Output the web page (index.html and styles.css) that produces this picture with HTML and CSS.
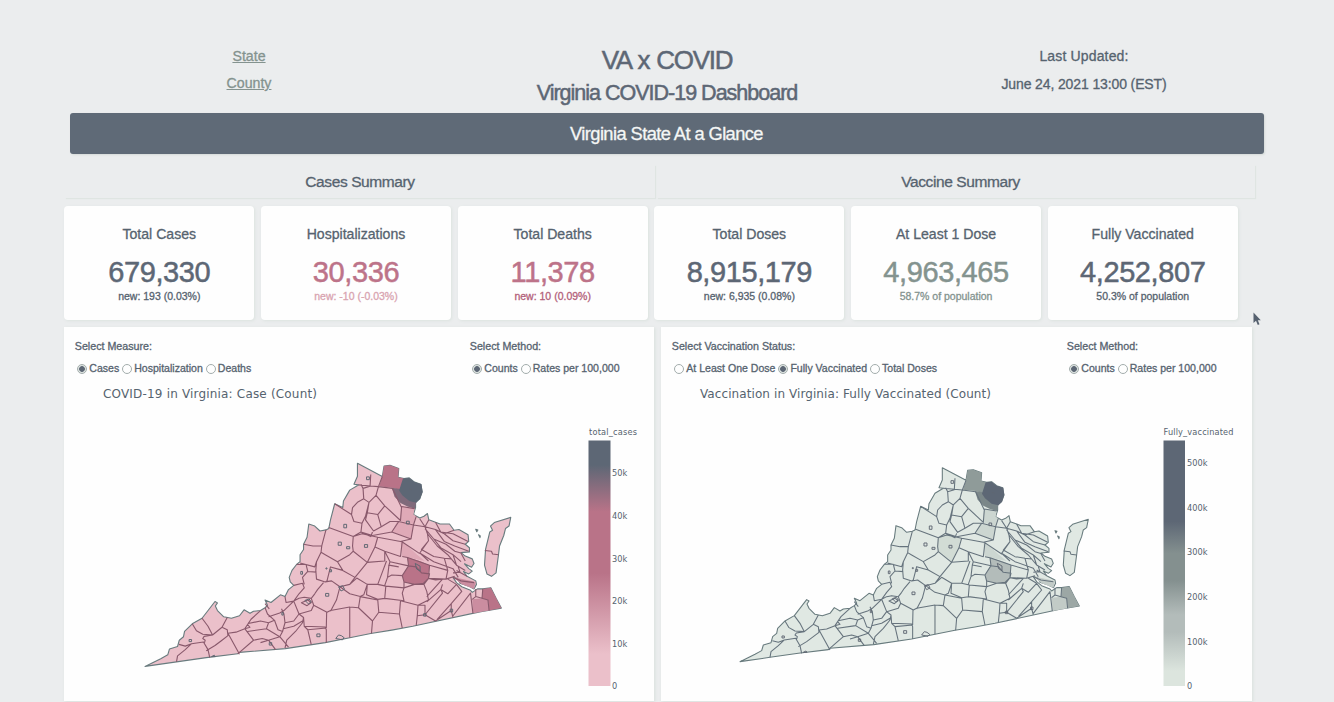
FILE: index.html
```html
<!DOCTYPE html>
<html lang="en">
<head>
<meta charset="utf-8">
<title>VA x COVID</title>
<link rel="stylesheet" href="styles.css">
</head>
<body>
<svg class="defs" width="0" height="0" aria-hidden="true">
  <defs>
    <linearGradient id="rose" x1="0" y1="1" x2="0" y2="0">
      <stop offset="0" stop-color="#ebc0ca"/><stop offset=".13" stop-color="#ebc0ca"/>
      <stop offset=".46" stop-color="#b97388"/><stop offset=".71" stop-color="#b97388"/>
      <stop offset=".9" stop-color="#5d6775"/><stop offset="1" stop-color="#5d6775"/>
    </linearGradient>
    <linearGradient id="slate" x1="0" y1="1" x2="0" y2="0">
      <stop offset="0" stop-color="#dce5de"/><stop offset=".06" stop-color="#dce5de"/>
      <stop offset=".22" stop-color="#b3bcba"/><stop offset=".29" stop-color="#b3bcba"/>
      <stop offset=".43" stop-color="#84908f"/><stop offset=".54" stop-color="#84908f"/>
      <stop offset=".67" stop-color="#5d6775"/><stop offset="1" stop-color="#5d6775"/>
    </linearGradient>
    <g id="virginia">
      <path class="land" d="M15 620L60 598 80 587 85 570 108 563 113 545 125 535 128 520 150 498 178 482 215 434 222 438 216 447 222 460 240 478 262 482 285 475 298 458 315 468 325 462 345 460 358 452 365 445 358 430 375 437 402 415 415 420 425 400 440 388 430 378 427 365 435 345 448 328 458 320 458 300 468 285 468 270 478 250 483 212 500 218 515 232 532 229 540 225 545 200 557 154 580 165 582 146 600 115 625 100 612 98 622 75 622 38 693 76 698 46 715 44 740 53 738 78 755 82 770 80 785 92 803 98 807 120 800 140 788 150 788 165 782 185 800 195 812 190 822 182 826 200 845 207 858 212 885 212 898 230 912 228 938 243 940 262 930 270 942 280 942 292 918 294 930 304 950 312 955 325 948 336 928 326 940 340 950 347 940 355 925 348 935 362 960 375 962 385 955 398 940 390 915 382 908 368 895 365 905 380 920 392 945 402 950 408 965 398 980 398 1003 395 1018 425 1033 453 975 463 780 505 720 516 660 526 600 538 530 552 416 569 285 580 280 584 190 595 105 607Z"/>
      <path class="land" d="M1013 208L1060 193 1055 218 1045 225 1040 245 1028 275 1025 300 1018 352 1005 362 992 355 985 330 988 285 1000 235 1008 230 1002 218ZM960 227l6 2-3 5zM968 243l5 3-1 5z"/>
      <path class="c-alb" d="M610 248L635 240 680 250 672 278 650 322 610 290 608 275Z"/>
      <path class="c-lou" d="M693 76L698 46 715 44 740 53 738 78 755 82 745 115 722 108 684 104Z"/>
      <path class="c-pw" d="M720 108L745 112 765 130 790 150 786 168 765 162 745 152 728 134Z"/>
      <path class="c-ffx" d="M752 82L770 80 785 92 805 98 808 120 801 140 790 151 770 146 750 130 741 116Z"/>
      <path class="c-mid" d="M748 162L785 168 782 185 790 190 782 213 742 202ZM735 205L782 215 775 255 720 235ZM745 262L752 262 790 298 815 318 765 308 750 305Z"/>
      <path class="c-ric" d="M765 308L800 318 828 330 825 355 825 368 810 382 785 385 755 378 750 360 768 332Z"/>
      <path class="c-vb" d="M980 398L1003 395 1033 453 998 460 995 430 978 425Z"/>
      <path class="c-che" d="M950 428L978 425 995 430 998 460 953 468ZM895 365L915 368 960 378 955 398 920 385Z"/>
      <path class="border" d="M105 607L108 590 130 572 148 555 182 550 195 572 200 595M112 557L130 562 148 555M150 498L162 518 180 528 208 530M178 482L195 505 208 530 235 508 250 480M185 552L187 545 180 540 184 534 208 530M190 575L215 560 235 545 252 532 250 515 235 508M252 525L285 585M252 525L275 522 300 512 315 508 308 500M318 485L310 497 300 512 325 545 280 584M345 460L318 485 310 497 345 490 368 495 385 488 365 470 358 452M325 545L350 540 368 545 388 572M308 520L362 512 368 495M362 512L400 535 425 565M385 488L395 515 408 520 400 535M345 552L368 545 400 535M368 478L400 467 412 460 440 433 455 470 440 490 415 495 408 520M358 440L370 455M405 455L412 470 415 495M415 420L418 437 440 433M440 388L465 382 470 395 455 412 440 433M410 512L440 505 465 490M455 470L468 480 465 495 445 520 420 545 415 568M440 433L455 425 470 422 490 425 497 445 490 460 455 470M462 438L480 430 490 437 478 446ZM468 480L470 505 480 515 490 558M470 505L530 507 533 515 533 552M480 515L533 510M497 445L535 465 545 460 600 450 600 538M534 465L533 510M490 425L500 412 508 400 525 380M470 385L465 365 480 348 505 350M448 328L475 328 480 348M458 324L500 335 505 320M468 270L495 275 520 275 532 229M520 275L518 293 505 320 503 345 505 370 530 378M540 222L610 248 608 275 610 290 600 300 565 320 530 300 518 293M557 154L605 185 612 205 635 210 632 235 610 248M605 185L608 165 622 150 640 140 638 110 632 98M638 110L658 104 660 70M625 100L658 103 682 105 693 76M682 105L675 130 655 150 640 140M655 150L645 190 635 210M675 130L700 160 745 202 748 165 722 110 682 105M655 150L650 180 680 185 700 160M680 185L690 220 668 232 645 200 650 180M690 220L715 205 740 205 720 235 665 245 632 235M632 235L660 248 665 235M610 248L635 240 680 250 745 262 775 255 782 215 740 205M680 250L672 278 700 290 745 305 750 262M775 255L745 262M672 278L650 322 610 290M720 235L775 255M790 190L782 215 815 220 822 240 825 260 800 295 825 318M748 262L800 297M785 168L748 162M800 197L815 220 826 200M815 220L845 228 870 240 898 230M845 228L870 262 900 275 940 290M845 207L860 235 895 240 938 262M870 240L895 260 930 270M815 225L840 255 875 270 900 290 920 296M822 240L850 275 880 300 905 330 930 345M840 255L860 280 895 300 918 320M825 260L805 285 840 305 870 310 890 312M750 305L765 308 828 330 880 345M800 295L840 320 895 340 910 365M828 330L825 368 875 370 900 362M870 310L880 345 875 370M895 300L905 330M918 296L930 318M765 308L768 332 715 320 700 290M768 332L750 360 755 378 785 385 810 382 825 368 828 355 805 352 790 335 768 332M715 320L712 330 740 335M700 290L700 318 650 322 615 365 580 345 565 320M580 345L545 335 535 375 530 378 548 375 572 392 562 430 545 462M572 392L600 385 615 365M572 392L600 412 630 420 625 452 600 450M600 385L620 367 650 385 640 415 630 420M705 318L695 345 680 385 650 385 648 415 680 428 700 425 703 390 680 385M712 330L708 365 700 388M708 365L720 358 750 360M703 390L755 395 750 410 755 432 700 425M755 395L755 378M755 395L785 385 812 385 820 405 825 430 795 445 745 432M630 420L680 430 683 465 665 490 662 526M625 452L665 490M683 465L742 470 745 432M742 470L750 510M795 445L793 475 790 502M793 475L815 472 845 490M795 445L815 445 815 472 865 410 860 400 820 435M812 385L825 368 845 372 865 370 820 420M845 490L890 460 890 440 920 405 905 385M865 385L860 400 880 412 905 385 880 370M890 440L850 485M890 460L895 480M895 475L945 410 952 468M950 428L960 420 978 425 995 430 998 460M960 398L960 420M980 398L978 425M895 352L915 350 910 335M905 345L935 362M895 365L918 375 955 380M986 288L1005 290 1008 298 1025 300"/>
      <path class="city" d="M648 77h8v8h-8zM583 213h8v10h-8zM567 264h9v9h-9zM591 277h9v6h-9zM642 271h9v8h-9zM532 338h3v3h-3zM543 343h5v6h-5zM460 348h5v8h-5zM531 411h9v8h-9zM472 431l12-4 6 8-8 6zM506 527h9v8h-9zM560 540l8-10 8 2 8 6-5 6zM141 543h7v6h-7zM205 592l8-4 3 4zM370 552h7v7h-7zM406 466h4v7h-4zM568 392l12-3 5 10-10 5zM762 204h8v8h-8zM787 325l14 8 0 14-10-6zM811 469h7v7h-7zM887 456h7v8h-7zM770 112l8 2"/>
    </g>
  </defs>
</svg>

<header class="header">
  <nav class="links"><a href="#">State</a><a href="#">County</a></nav>
  <div class="titles"><h1>VA x COVID</h1><h2>Virginia COVID-19 Dashboard</h2></div>
  <div class="updated"><p>Last Updated:</p><p>June 24, 2021 13:00 (EST)</p></div>
</header>
<div class="banner"><span>Virginia State At a Glance</span></div>

<div class="sections">
  <h3 class="section"><span>Cases Summary</span></h3>
  <h3 class="section"><span>Vaccine Summary</span></h3>
</div>

<div class="cards">
  <article class="card"><h4>Total Cases</h4><p class="num">679,330</p><p class="note">new: 193 (0.03%)</p></article>
  <article class="card hosp"><h4>Hospitalizations</h4><p class="num">30,336</p><p class="note">new: -10 (-0.03%)</p></article>
  <article class="card deaths"><h4>Total Deaths</h4><p class="num">11,378</p><p class="note">new: 10 (0.09%)</p></article>
  <article class="card"><h4>Total Doses</h4><p class="num">8,915,179</p><p class="note">new: 6,935 (0.08%)</p></article>
  <article class="card dose"><h4>At Least 1 Dose</h4><p class="num">4,963,465</p><p class="note">58.7% of population</p></article>
  <article class="card"><h4>Fully Vaccinated</h4><p class="num">4,252,807</p><p class="note">50.3% of population</p></article>
</div>

<main class="panels">
  <section class="panel">
    <div class="controls">
      <div class="field"><p>Select Measure:</p>
        <div class="radios"><label class="on"><i></i>Cases</label><label><i></i>Hospitalization</label><label><i></i>Deaths</label></div></div>
      <div class="field"><p>Select Method:</p>
        <div class="radios"><label class="on"><i></i>Counts</label><label><i></i>Rates per 100,000</label></div></div>
    </div>
    <svg class="plot cases" viewBox="64 382 590 319">
      <text class="title" x="103" y="398" textLength="214">COVID-19 in Virginia: Case (Count)</text>
      <use href="#virginia" transform="translate(139.75 450) scale(.35 .349)"/>
      <text class="tick" x="589" y="435" textLength="48">total_cases</text>
      <rect x="588.5" y="440.500" width="22" height="245.500" fill="url(#rose)"/>
      <g class="tick"><text x="612" y="476">50k</text><text x="612" y="519">40k</text><text x="612" y="562">30k</text><text x="612" y="604">20k</text><text x="612" y="647">10k</text><text x="612" y="689">0</text></g>
    </svg>
  </section>
  <section class="panel">
    <div class="controls">
      <div class="field"><p>Select Vaccination Status:</p>
        <div class="radios"><label><i></i>At Least One Dose</label><label class="on"><i></i>Fully Vaccinated</label><label><i></i>Total Doses</label></div></div>
      <div class="field"><p>Select Method:</p>
        <div class="radios"><label class="on"><i></i>Counts</label><label><i></i>Rates per 100,000</label></div></div>
    </div>
    <svg class="plot vaccines" viewBox="661 382 590 319">
      <text class="title" x="700" y="398" textLength="291">Vaccination in Virginia: Fully Vaccinated (Count)</text>
      <use href="#virginia" transform="translate(735 455) scale(.3333)"/>
      <text class="tick" x="1163.500" y="435" textLength="70">Fully_vaccinated</text>
      <rect x="1163.500" y="440.500" width="21.500" height="245.500" fill="url(#slate)"/>
      <g class="tick"><text x="1187" y="466">500k</text><text x="1187" y="511">400k</text><text x="1187" y="555">300k</text><text x="1187" y="600">200k</text><text x="1187" y="645">100k</text><text x="1187" y="689">0</text></g>
    </svg>
  </section>
</main>
<svg class="cursor" viewBox="0 0 8 14"><path d="M.5 .5V11L3 8.700 4.800 13 6.500 12.300 4.800 8.200H7.800Z"/></svg>
</body>
</html>
```

FILE: styles.css
```css
* { box-sizing: border-box; }
body {
  margin: 0;
  width: 1334px;
  height: 702px;
  overflow: hidden;
  background: #ebedee;
  color: #56636f;
  font-family: "Liberation Sans", Arial, sans-serif;
  -webkit-text-stroke: .3px currentColor;
}
h1, h2, h3, h4, p { margin: 0; font-weight: 400; }
.defs { display: block; }

.header {
  display: grid;
  grid-template-columns: repeat(3, 417px);
  justify-content: center;
  height: 113px;
  padding-top: 43px;
  text-align: center;
}
.links { display: flex; flex-direction: column; align-items: center; margin-right: 2px; }
.links a {
  color: #84938f;
  font-size: 14.200px;
  line-height: 27px;
  text-decoration: underline;
}
.titles h1 { margin-top: 1px; font-size: 26px; line-height: 33px; letter-spacing: -1.250px; word-spacing: 1px; color: #5d6775; -webkit-text-stroke-width: .5px; }
.titles h2 { font-size: 21.500px; line-height: 32px; letter-spacing: -1px; white-space: nowrap; color: #5d6775; -webkit-text-stroke-width: .5px; }
.updated { font-size: 14px; line-height: 28px; letter-spacing: -.12px; }
.updated p:first-child { margin-top: -1px; letter-spacing: .15px; }

.banner {
  width: 1194px;
  height: 41px;
  margin-left: 69.5px;
  border-radius: 3px;
  background: #5f6a77;
  box-shadow: 1px 1px 2px #d5dbd8;
  color: #f4f6f5;
  font-size: 18.300px;
  line-height: 41px;
  letter-spacing: -.58px;
  text-align: center;
}

.sections {
  display: grid;
  grid-template-columns: 590px 598px;
  gap: 2px;
  margin: 11px 0 0 65px;
}
.section {
  height: 33px;
  font-size: 15.500px;
  letter-spacing: -.4px;
  line-height: 34px;
  text-align: center;
  box-shadow: 1px 1px 1px #dfe5e2;
}
.section + .section { padding-left: 9px; }

.cards {
  display: grid;
  grid-template-columns: repeat(6, 190px);
  gap: 6.700px;
  margin: 8px 0 0 64.300px;
}
.card {
  height: 114px;
  padding-top: 19px;
  border-radius: 4px;
  background: #fefefe;
  box-shadow: 1px 1px 3px #dce3df;
  text-align: center;
}
.card h4 { font-size: 14.100px; line-height: 18px; }
.card .num { margin-top: 11px; font-size: 29px; line-height: 36px; letter-spacing: -.4px; color: #5d6775; -webkit-text-stroke-width: .5px; }
.card .note { font-size: 10.500px; line-height: 13px; }
.card.hosp .num, .card.deaths .num { color: #bd7389; }
.hosp .note { color: #d9a4b0; }
.deaths .note { color: #b3617a; }
.card.dose .num, .dose .note { color: #84938f; }

.panels {
  display: grid;
  grid-template-columns: 590px 590.500px;
  gap: 7px;
  margin: 7px 0 0 64.300px;
}
.panel {
  height: 374px;
  background: #fefefe;
  box-shadow: 1px 1px 3px #d8e0dc;
}
.controls {
  display: grid;
  grid-template-columns: 395px 1fr;
  height: 55px;
  padding: 12px 0 0 10.500px;
}
.field p { font-size: 10.700px; line-height: 14px; }
.radios { display: flex; gap: 3px; margin: 8px 0 0 2.500px; font-size: 10.550px; line-height: 15px; white-space: nowrap; }
.radios label { display: flex; align-items: center; gap: 2px; }
.radios i {
  width: 10px;
  height: 10px;
  border: 1px solid #a3adac;
  border-radius: 50%;
  background: #fefefe;
}
.radios .on i { background: radial-gradient(circle, #5d6775 0 2.500px, #dfe5e2 3.200px); }

.plot { display: block; width: 590px; height: 319px; fill: #56636f; }
.plot .title { font: 12px "DejaVu Sans", Verdana, sans-serif; }
.tick { font: 8.200px "DejaVu Sans", Verdana, sans-serif; }
.plot .title, .tick { -webkit-text-stroke: 0; }
.cases {
  --land: #ebc0ca; --line: #89596c; --lou: #b97388; --pw: #806a7b; --ffx: #5d6775;
  --mid: #dfa9b7; --ric: #b97388; --vb: #b97388; --che: #cb8da0; --alb: #e9bac5;
}
.vaccines {
  --land: #e0e8e3; --line: #66737d; --lou: #8f9b99; --pw: #7b8789; --ffx: #5d6775;
  --mid: #ccd6d1; --ric: #b3bcba; --vb: #9ca7a5; --che: #c2cbc7; --alb: #d2dcd5;
}
.land { fill: var(--land); stroke: #687b7e; stroke-width: 3.200px; stroke-linejoin: round; }
.border { fill: none; stroke: var(--line); stroke-width: 3.200px; stroke-linejoin: round; }
.city { fill: none; stroke: #5f6672; stroke-width: 2.800px; }
.c-lou { fill: var(--lou); }
.c-pw { fill: var(--pw); }
.c-ffx { fill: var(--ffx); }
.c-mid { fill: var(--mid); }
.c-ric { fill: var(--ric); }
.c-vb { fill: var(--vb); }
.c-che { fill: var(--che); }
.c-alb { fill: var(--alb); }

.cursor { position: absolute; left: 1253px; top: 312px; width: 8px; height: 14px; fill: #56616f; }
```
